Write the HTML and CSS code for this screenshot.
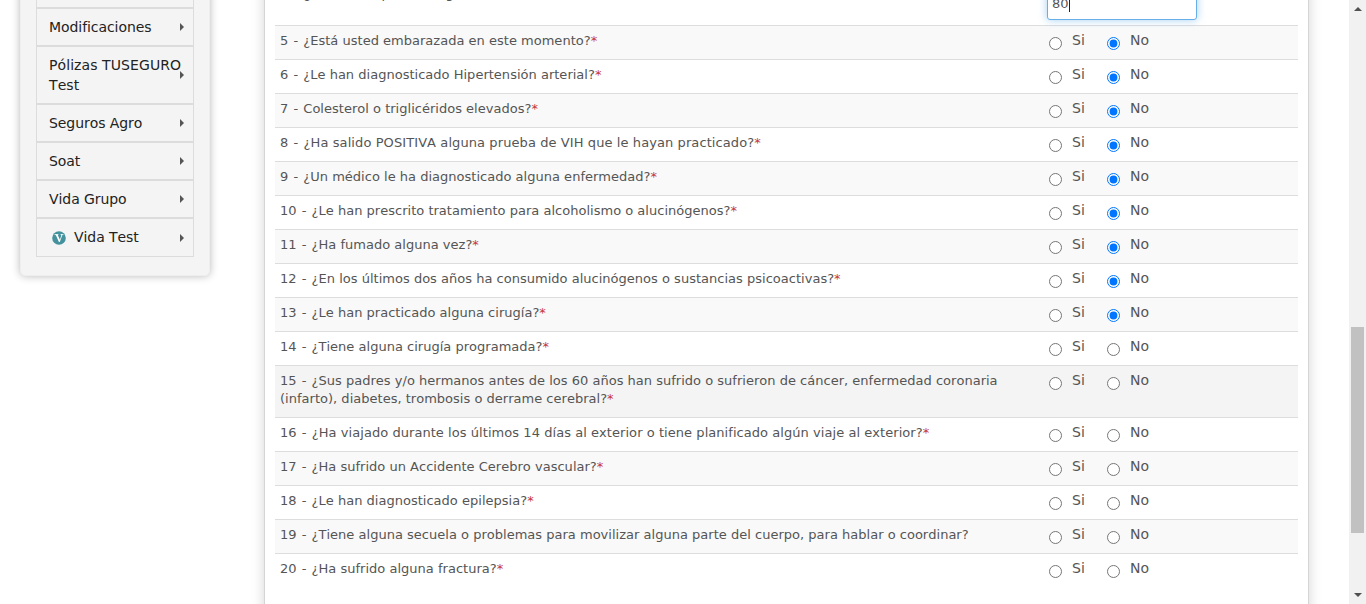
FILE: index.html
```
<!DOCTYPE html>
<html lang="es">
<head>
<meta charset="utf-8">
<title>Declaración de asegurabilidad</title>
<link rel="stylesheet" href="styles.css">
</head>
<body>
<div class="page">
  <nav class="sidebar">
    <ul class="menu">
      <li class="item">&nbsp;</li>
      <li class="item">Modificaciones<i class="arrow"></i></li>
      <li class="item wide">Pólizas TUSEGURO<br>Test<i class="arrow"></i></li>
      <li class="item">Seguros Agro<i class="arrow"></i></li>
      <li class="item">Soat<i class="arrow"></i></li>
      <li class="item">Vida Grupo<i class="arrow"></i></li>
      <li class="item last"><svg class="logo" width="14" height="14" viewBox="0 0 14 14"><circle cx="7" cy="7" r="6.8" fill="#44929d"/><path d="M2.6 3.6H6.4M8.6 3.6H11.4" stroke="#fff" stroke-width=".9"/><path d="M3.6 3.6H5.5L7.9 8.7L9.6 3.6H10.5L7.8 11H6.9Z" fill="#fff"/></svg>Vida Test<i class="arrow"></i></li>
    </ul>
  </nav>
  <main class="panel">
    <div class="questions" id="questions">
      <div class="row first"><div class="q">4 <span class="dash">-</span> ¿Cuál es su peso (Kilogramos)?<b>*</b></div><div class="field">80<i class="caret"></i></div></div>
    </div>
  </main>
  <div class="scrollbar"><i class="up"></i><i class="thumb"></i><i class="down"></i></div>
</div>
<script src="questions.js"></script>
</body>
</html>
```
FILE: styles.css
```
* { box-sizing: border-box; }
body { margin: 0; height: 604px; overflow: hidden; background: #fff; font-family: Verdana, "DejaVu Sans", sans-serif; font-kerning: none; color: #555; }
.page { display: flex; height: 604px; overflow: hidden; }
.sidebar { width: 190px; height: 312px; margin: -36px 54px 0 20px; padding: 5px 15px 0; background: #f4f4f4; border: 1px solid #eee; border-radius: 5px; box-shadow: 0 0 8px rgba(0,0,0,.28); flex: none; }
.menu { list-style: none; margin: 0; padding: 0; width: 158px; }
.item { display: flex; align-items: center; position: relative; min-height: 38px; padding: 8px 12px; border: 1px solid #dcdcdc; font-size: 14px; line-height: 20px; letter-spacing: -.07px; color: #222; white-space: nowrap; }
.item.wide { letter-spacing: .08px; }
.item.last { height: 39px; padding: 7px 12px 9px 15px; }
.logo { margin: 2px 8px 0 0; }
.arrow { position: absolute; right: 9px; top: 50%; margin-top: -4px; border: 4px solid transparent; border-left-color: #555; border-right: 0; }
.panel { width: 1045px; height: 640px; margin-top: -20px; padding: 0 10px; background: #fff; border: 1px solid #d5d5d5; box-shadow: 0 0 12px rgba(0,0,0,.17); flex: none; }
.row { display: flex; min-height: 34px; padding: 6px 5px 9px; border-top: 1px solid #ddd; font-size: 13px; line-height: 18px; letter-spacing: .015px; }
.row.first { height: 44px; padding: 0 5px; border: 0; }
.row:nth-child(even) { background: #f9f9f9; }
.row.hover { background: #f4f4f4; }
.row.spaced { letter-spacing: .055px; }
.row.loose { letter-spacing: .09px; }
.q { width: 767px; flex: none; white-space: nowrap; }
.first .q { margin-top: 4px; }
.dash { margin: 0 1px; }
b { font-weight: normal; color: #c4363b; }
.field { display: flex; align-items: center; width: 150px; height: 34px; margin-top: 5px; padding: 2px 5px 0 4px; background: #fff; border: 1px solid #66afe9; border-radius: 3px; box-shadow: 0 0 8px rgba(102,175,233,.6); font-size: 13px; letter-spacing: 0; }
.caret { width: 1px; height: 15px; background: #222; }
.choices { display: flex; height: 18px; margin-top: -1px; font-size: 14px; letter-spacing: 0; }
.choices input { width: 13px; height: 13px; margin: 6px 10px 0 2px; accent-color: #0075ff; }
.choices label { display: flex; width: 58px; }
.scrollbar { display: flex; flex-direction: column; align-items: center; width: 17px; height: 604px; margin-left: auto; background: #f1f1f1; flex: none; }
.up { margin-top: 7px; border: 4px solid transparent; border-bottom-color: #505050; border-top: 0; }
.thumb { width: 13px; height: 206px; margin-top: 316px; background: #c1c1c1; }
.down { margin-top: 60px; border: 4px solid transparent; border-top-color: #505050; border-bottom: 0; }
```
FILE: questions.js
```
const questions = [
  ["¿Está usted embarazada en este momento?", true],
  ["¿Le han diagnosticado Hipertensión arterial?", true],
  ["Colesterol o triglicéridos elevados?", true],
  ["¿Ha salido POSITIVA alguna prueba de VIH que le hayan practicado?", true, "loose"],
  ["¿Un médico le ha diagnosticado alguna enfermedad?", true],
  ["¿Le han prescrito tratamiento para alcoholismo o alucinógenos?", true],
  ["¿Ha fumado alguna vez?", true],
  ["¿En los últimos dos años ha consumido alucinógenos o sustancias psicoactivas?", true],
  ["¿Le han practicado alguna cirugía?", true],
  ["¿Tiene alguna cirugía programada?", false],
  ["¿Sus padres y/o hermanos antes de los 60 años han sufrido o sufrieron de cáncer, enfermedad coronaria<br>(infarto), diabetes, trombosis o derrame cerebral?", false, "hover"],
  ["¿Ha viajado durante los últimos 14 días al exterior o tiene planificado algún viaje al exterior?", false, "spaced"],
  ["¿Ha sufrido un Accidente Cerebro vascular?", false],
  ["¿Le han diagnosticado epilepsia?", false],
  ["¿Tiene alguna secuela o problemas para movilizar alguna parte del cuerpo, para hablar o coordinar?", false],
  ["¿Ha sufrido alguna fractura?", false]
];
const list = document.getElementById("questions");
questions.forEach(([text, answeredNo, variant = ""], i) => {
  const n = i + 5;
  const mark = n === 19 ? "" : "<b>*</b>";
  list.insertAdjacentHTML("beforeend",
    `<div class="row ${variant}"><div class="q">${n} <span class="dash">-</span> ${text}${mark}</div>` +
    `<div class="choices"><label><input type="radio" name="q${n}">Si</label>` +
    `<label><input type="radio" name="q${n}"${answeredNo ? " checked" : ""}>No</label></div></div>`);
});
```
